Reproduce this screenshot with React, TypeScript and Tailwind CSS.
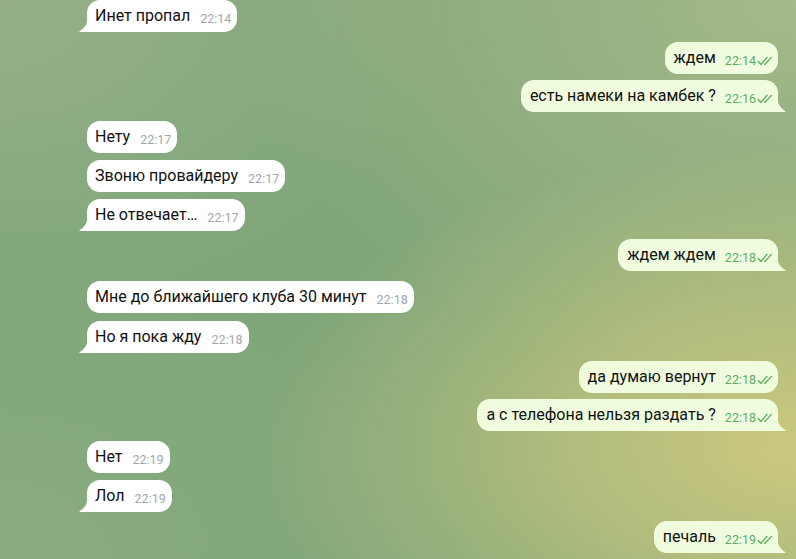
import React from "react";

type Msg = { text: string; time: string; out: boolean; tail: boolean; mt: string };

const msgs: Msg[] = [
  { text: "Инет пропал", time: "22:14", out: false, tail: true, mt: "mt-[0px]" },
  { text: "ждем", time: "22:14", out: true, tail: false, mt: "mt-[10px]" },
  { text: "есть намеки на камбек ?", time: "22:16", out: true, tail: true, mt: "mt-[6px]" },
  { text: "Нету", time: "22:17", out: false, tail: false, mt: "mt-[9px]" },
  { text: "Звоню провайдеру", time: "22:17", out: false, tail: false, mt: "mt-[7px]" },
  { text: "Не отвечает…", time: "22:17", out: false, tail: true, mt: "mt-[7px]" },
  { text: "ждем ждем", time: "22:18", out: true, tail: true, mt: "mt-[8px]" },
  { text: "Мне до ближайшего клуба 30 минут", time: "22:18", out: false, tail: false, mt: "mt-[10px]" },
  { text: "Но я пока жду", time: "22:18", out: false, tail: true, mt: "mt-[8px]" },
  { text: "да думаю вернут", time: "22:18", out: true, tail: false, mt: "mt-[8px]" },
  { text: "а с телефона нельзя раздать ?", time: "22:18", out: true, tail: true, mt: "mt-[6px]" },
  { text: "Нет", time: "22:19", out: false, tail: false, mt: "mt-[10px]" },
  { text: "Лол", time: "22:19", out: false, tail: true, mt: "mt-[7px]" },
  { text: "печаль", time: "22:19", out: true, tail: true, mt: "mt-[9px]" },
];

function Checks() {
  return (
    <svg width="16" height="10" viewBox="0 0 16 10" className="ml-[1px]" fill="none">
      <path d="M1.2 5.6 L4 8.4 L10 1.4" stroke="#5dad5e" strokeWidth="1.4" strokeLinecap="round" strokeLinejoin="round" />
      <path d="M7.6 8.2 L8 8.4 L14.4 1.4" stroke="#5dad5e" strokeWidth="1.4" strokeLinecap="round" strokeLinejoin="round" />
    </svg>
  );
}

function Bubble({ m }: { m: Msg }) {
  const bg = m.out ? "bg-[#effdde]" : "bg-white";
  const fill = m.out ? "#effdde" : "#ffffff";
  let radius = "rounded-[13px]";
  if (m.tail) radius = m.out ? "rounded-[13px] rounded-br-none" : "rounded-[13px] rounded-bl-none";
  return (
    <div className={`flex ${m.out ? "justify-end pr-[18px]" : "justify-start pl-[87px]"} ${m.mt}`}>
      <div className={`relative h-[32px] flex items-center ${bg} ${radius} ${m.out ? "pl-[9px] pr-[5px]" : "pl-[8px] pr-[6px]"}`}>
        <span className="text-[16px] text-[#111111] leading-none">{m.text}</span>
        <span
          className={`self-end mb-[7px] ${m.out ? "ml-[9px] text-[#5dad5e]" : "ml-[10px] text-[#a0a8ae]"} text-[12.5px] leading-none flex items-center`}
        >
          {m.time}
          {m.out && <Checks />}
        </span>
        {m.tail && !m.out && (
          <svg className="absolute bottom-0 left-[-8px]" width="9" height="17" viewBox="0 0 9 17">
            <path d="M9 0 C9 8 6 13 0.8 16 C0.3 16.3 0.4 17 1 17 L9 17 Z" fill={fill} />
          </svg>
        )}
        {m.tail && m.out && (
          <svg className="absolute bottom-0 right-[-8px]" width="9" height="17" viewBox="0 0 9 17">
            <path d="M0 0 C0 8 3 13 8.2 16 C8.7 16.3 8.6 17 8 17 L0 17 Z" fill={fill} />
          </svg>
        )}
      </div>
    </div>
  );
}

export default function App() {
  return (
    <div
      className="w-[796px] h-[559px] overflow-hidden flex flex-col bg-[#7fa67a] bg-[radial-gradient(ellipse_at_100%_80%,#cbc87f_0%,rgba(203,200,127,0.7)_18%,rgba(203,200,127,0)_48%),radial-gradient(ellipse_at_100%_0%,#a6b988_0%,rgba(166,185,136,0)_50%),radial-gradient(ellipse_at_0%_0%,#95b088_0%,rgba(149,176,136,0)_40%),radial-gradient(ellipse_at_0%_100%,#89ab80_0%,rgba(137,171,128,0)_40%)]"
      style={{ fontFamily: "Roboto, 'Noto Sans', sans-serif" }}
    >
      {msgs.map((m, i) => (
        <Bubble key={i} m={m} />
      ))}
    </div>
  );
}
